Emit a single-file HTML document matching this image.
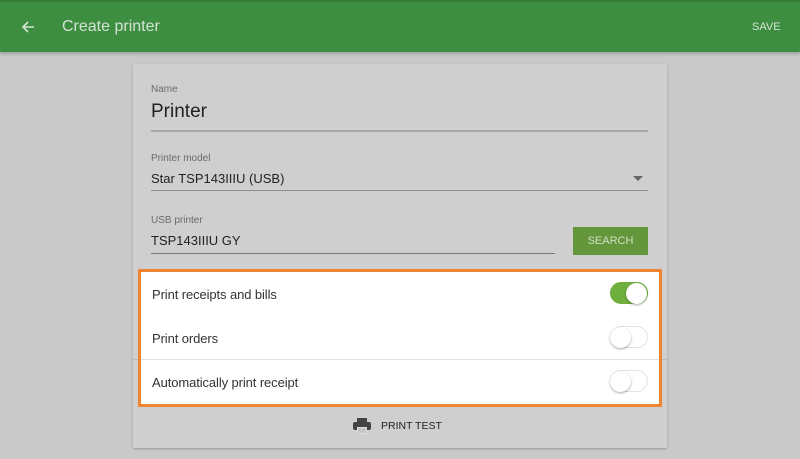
<!DOCTYPE html>
<html><head><style>
*{margin:0;padding:0;box-sizing:border-box}
body{width:800px;height:459px;background:#c9c9c9;font-family:"Liberation Sans",sans-serif;position:relative;overflow:hidden}
.hdr{position:absolute;left:0;top:0;width:800px;height:52px;background:#3d8e41;border-top:2px solid #337a36;box-shadow:0 2px 3px rgba(0,0,0,.2)}
.abs{position:absolute}
.card{position:absolute;left:133px;top:64px;width:534px;height:384px;background:#cfcfcf;box-shadow:0 1px 2px rgba(0,0,0,.25)}
.lbl{position:absolute;font-size:10px;color:#6a6a6a}
.val{position:absolute;color:#222}
.line{position:absolute;height:1px;background:#8e8e8e}
.box{position:absolute;left:138px;top:269px;width:524px;height:138px;border:3px solid #f08433;background:#fff}
.row{position:absolute;left:11px;font-size:13px;color:#333;letter-spacing:-0.1px}
.sw{position:absolute;width:38px;height:22px;border-radius:11px;border:1px solid #e2e2e2;background:#fff}
.knob{position:absolute;top:1px;width:21px;height:21px;border-radius:50%;background:#fff;box-shadow:0 1px 2px rgba(0,0,0,.35)}
</style></head><body>
<div class="hdr">
<svg class="abs" style="left:20px;top:17px" width="16" height="16" viewBox="0 0 16 16"><path d="M14 8H3M8 3L3 8l5 5" stroke="#d6e4d6" stroke-width="1.6" fill="none"/></svg>
<div class="abs" style="left:62px;top:16px;font-size:16px;color:#d4e2d4">Create printer</div>
<div class="abs" style="left:752px;top:19px;font-size:11px;color:#d4e2d4">SAVE</div>
</div>
<div class="card">
<div class="lbl" style="left:18px;top:20px">Name</div>
<div class="val" style="left:18px;top:37px;font-size:19px">Printer</div>
<div class="line" style="left:18px;top:66px;width:497px;height:2px;background:#a8a8a8"></div>
<div class="lbl" style="left:18px;top:89px">Printer model</div>
<div class="val" style="left:18px;top:107px;font-size:13px">Star TSP143IIIU (USB)</div>
<div class="abs" style="left:500px;top:112px;width:0;height:0;border-left:5px solid transparent;border-right:5px solid transparent;border-top:5px solid #666"></div>
<div class="line" style="left:18px;top:126px;width:497px"></div>
<div class="lbl" style="left:18px;top:151px">USB printer</div>
<div class="val" style="left:18px;top:169px;font-size:13px">TSP143IIIU GY</div>
<div class="line" style="left:18px;top:189px;width:404px;background:#777"></div>
<div class="abs" style="left:440px;top:163px;width:75px;height:28px;background:#64963b;color:#cfe0c4;font-size:11px;text-align:center;line-height:28px">SEARCH</div>
<div class="line" style="left:0;top:295px;width:534px;background:#bbb"></div>
<svg class="abs" style="left:220px;top:354px" width="18" height="16" viewBox="0 0 18 16"><rect x="4" y="0" width="10" height="4" fill="#444"/><rect x="0" y="4" width="18" height="8" rx="2" fill="#444"/><rect x="4" y="9" width="10" height="7" fill="#ddd"/><rect x="5" y="10" width="8" height="5" fill="#444" opacity=".15"/></svg>
<div class="abs" style="left:248px;top:356px;font-size:10.5px;color:#222">PRINT TEST</div>
</div>
<div class="box">
<div class="row" style="top:15px">Print receipts and bills</div>
<div class="sw" style="left:469px;top:10px;background:#6faf3e;border-color:#6faf3e"><div class="knob" style="left:15px;top:-0.5px"></div></div>
<div class="row" style="top:59px">Print orders</div>
<div class="sw" style="left:469px;top:54px"><div class="knob" style="left:-1px;top:-0.5px"></div></div>
<div class="abs" style="left:0;top:87px;width:518px;height:1px;background:#e2e2e2"></div>
<div class="row" style="top:103px">Automatically print receipt</div>
<div class="sw" style="left:469px;top:98px"><div class="knob" style="left:-1px;top:-0.5px"></div></div>
</div>
</body></html>
